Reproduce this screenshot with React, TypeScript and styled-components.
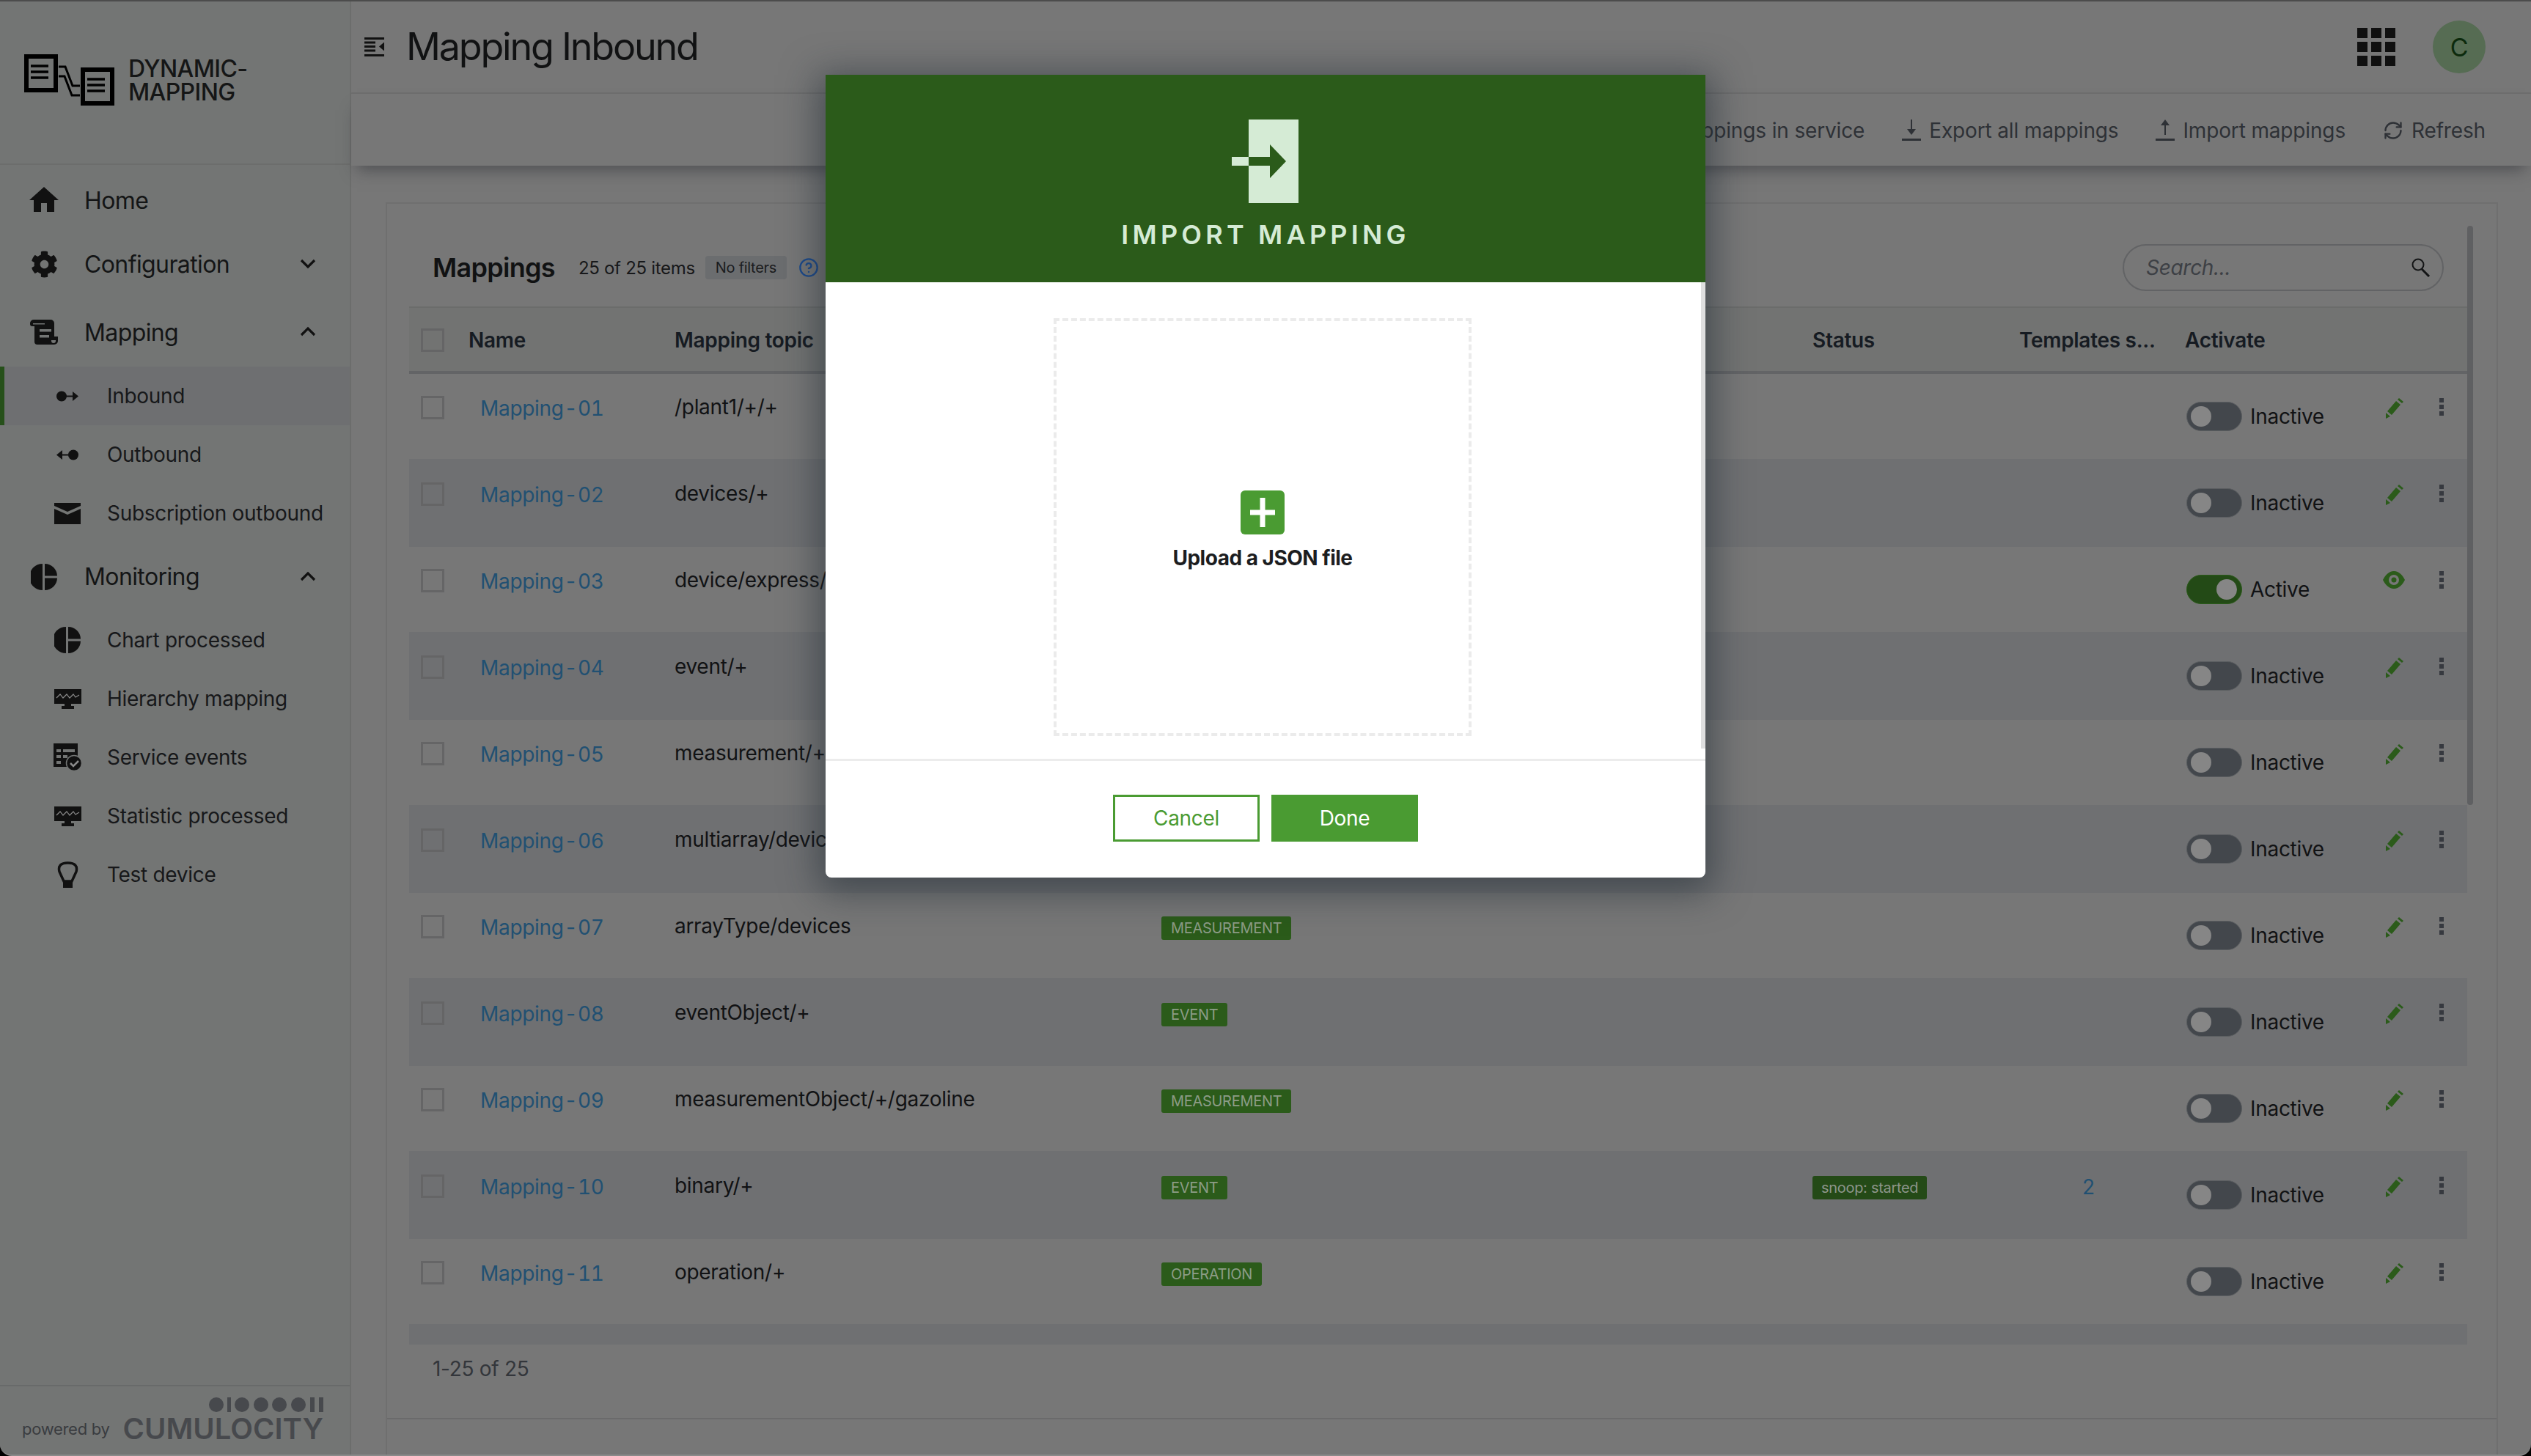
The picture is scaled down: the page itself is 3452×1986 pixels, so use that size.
import * as React from 'react';
import styled, { createGlobalStyle } from 'styled-components';
import { RefreshCw, CircleHelp } from 'lucide-react';
import { MdHome } from 'react-icons/md';
import { FaCog } from 'react-icons/fa';

const fontStack = `Inter, "Liberation Sans", sans-serif`;

const GlobalStyle = createGlobalStyle`
  html, body { margin: 0; padding: 0; background: #000; }
  body { font-family: ${fontStack}; color: #101214; letter-spacing: -0.3px; }
  * { box-sizing: border-box; }
`;

const Page = styled.div`
  position: relative;
  width: 3452px;
  height: 1986px;
  display: flex;
  overflow: hidden;
  background: #777;
  border-top: 2px solid #4c4c4c;
  border-bottom: 2px solid #8a8a8a;
  border-radius: 0 0 16px 16px;
`;

const Sidebar = styled.aside`
  width: 479px;
  flex: none;
  display: flex;
  flex-direction: column;
  background: #737574;
  border-right: 2px solid #6c6d6c;
`;

const Brand = styled.div`
  height: 223px;
  flex: none;
  display: flex;
  align-items: flex-start;
  gap: 18px;
  padding: 72px 0 0 33px;
  border-bottom: 2px solid #6c6d6c;
`;

const BrandText = styled.div`
  font-size: 32px;
  line-height: 32px;
  padding-top: 4px;
  font-weight: 500;
  letter-spacing: -0.6px;
  color: #151616;
`;

const Nav = styled.nav`
  flex: 1;
  padding-top: 23px;
`;

const NavGroup = styled.div<{ $h: number }>`
  height: ${p => p.$h}px;
  display: flex;
  align-items: center;
  padding: 0 46px 0 40px;
  font-size: 32px;
  letter-spacing: -0.6px;
  color: #141516;
`;

const NavIcon = styled.span`
  width: 40px;
  height: 40px;
  margin-right: 35px;
  display: flex;
  align-items: center;
  justify-content: center;
  svg { flex: none; }
`;

const NavLabel = styled.span`
  flex: 1;
`;

const SubList = styled.div<{ $top?: number }>`
  padding-top: ${p => p.$top ?? 0}px;
`;

const NavSub = styled.div<{ $active?: boolean }>`
  height: 80px;
  display: flex;
  align-items: center;
  padding-left: ${p => (p.$active ? 66 : 72)}px;
  font-size: 28px;
  color: #17181a;
  background: ${p => (p.$active ? '#6e6f71' : 'transparent')};
  border-left: ${p => (p.$active ? '6px solid #26501a' : '0')};
`;

const SubIcon = styled.span`
  width: 40px;
  height: 40px;
  margin-right: 34px;
  display: flex;
  align-items: center;
  justify-content: center;
`;

const Powered = styled.div`
  height: 95px;
  flex: none;
  border-top: 2px solid #686a6a;
  display: flex;
  align-items: flex-end;
  justify-content: space-between;
  padding: 0 36px 20px 30px;
  color: #3a3c40;
`;

const PoweredBy = styled.span`
  font-size: 22px;
  line-height: 30px;
  white-space: nowrap;
`;

const CumuloColumn = styled.div`
  display: flex;
  flex-direction: column;
  align-items: flex-end;
  gap: 8px;
`;

const Cumulo = styled.span`
  font-size: 40px;
  line-height: 30px;
  font-weight: 600;
  color: #47494d;
  letter-spacing: 0;
`;

const Main = styled.main`
  flex: 1;
  min-width: 0;
  display: flex;
  flex-direction: column;
`;

const TopBar = styled.header`
  height: 126px;
  flex: none;
  display: flex;
  align-items: center;
  padding: 0 62px 0 18px;
  border-bottom: 2px solid #6e6e6e;
`;

const Title = styled.h1`
  flex: 1;
  margin: 0 0 2px 30px;
  font-size: 52px;
  font-weight: 400;
  letter-spacing: -2.2px;
  color: #111213;
`;

const Avatar = styled.div`
  width: 72px;
  height: 72px;
  margin-left: 51px;
  border-radius: 50%;
  background: #566c53;
  color: #0c2a0c;
  font-size: 34px;
  display: flex;
  align-items: center;
  justify-content: center;
`;

const ActionBar = styled.div`
  height: 98px;
  flex: none;
  display: flex;
  align-items: center;
  justify-content: flex-end;
  gap: 51px;
  padding: 2px 62px 0 0;
  position: relative;
  background: #777;
  box-shadow: 0 14px 20px -8px rgba(40, 42, 48, 0.5);
`;

const Action = styled.span`
  display: flex;
  align-items: center;
  gap: 11px;
  font-size: 28px;
  letter-spacing: -0.15px;
  color: #2e3136;
`;

const Body = styled.div`
  flex: 1;
  min-height: 0;
  padding: 50px 45px 0 47px;
`;

const Card = styled.section`
  position: relative;
  height: 100%;
  border: 2px solid #6f6f6f;
  border-bottom: 0;
  display: flex;
  flex-direction: column;
`;

const CardHead = styled.div`
  height: 140px;
  flex: none;
  display: flex;
  align-items: center;
  padding: 34px 72px 0 62px;
`;

const CardTitle = styled.h2`
  margin: 0 32px 0 0;
  font-size: 36px;
  font-weight: 600;
  letter-spacing: -0.7px;
  color: #111213;
`;

const Count = styled.span`
  font-size: 24px;
  color: #17181a;
`;

const Chip = styled.span`
  height: 32px;
  padding: 0 14px;
  margin: 0 16px 0 14px;
  border-radius: 4px;
  background: #6b6d6f;
  font-size: 20px;
  display: flex;
  align-items: center;
  color: #1b1c1e;
`;

const Spacer = styled.div`
  flex: 1;
`;

const Search = styled.div`
  width: 438px;
  height: 64px;
  border: 2px solid #626365;
  border-radius: 32px;
  display: flex;
  align-items: center;
  justify-content: space-between;
  padding: 0 16px 0 30px;
  font-size: 28px;
  font-style: italic;
  color: #3d4045;
`;

const Table = styled.div`
  margin: 0 40px 0 30px;
`;

const columns = '81px 281px 664px 888px 282px 226px 264px 1fr';

const HeadRow = styled.div`
  height: 92px;
  display: grid;
  grid-template-columns: ${columns};
  align-items: center;
  padding-top: 2px;
  background: #727372;
  border-top: 2px solid #6b6c6b;
  border-bottom: 4px solid #636466;
  font-size: 28px;
  font-weight: 600;
  color: #161b22;
  white-space: nowrap;
`;

const Row = styled.div<{ $even: boolean }>`
  height: ${p => (p.$even ? 120 : 116)}px;
  display: grid;
  grid-template-columns: ${columns};
  align-items: start;
  padding-top: ${p => (p.$even ? 32 : 30)}px;
  background: ${p => (p.$even ? '#6f7072' : 'transparent')};
  font-size: 28px;
  color: #111214;
`;

const StripeRow = styled.div`
  height: 28px;
  background: #6f7072;
`;

const CheckCell = styled.div`
  padding-left: 16px;
  display: flex;
`;

const CheckBox = styled.span`
  width: 32px;
  height: 32px;
  border: 3px solid #656566;
`;

const MapLink = styled.span`
  display: block;
  padding: 2px 0 0 16px;
  word-spacing: -6.5px;
  font-variant-numeric: tabular-nums;
  color: #215072;
`;

const Cell = styled.div`
  line-height: 30px;
  white-space: nowrap;
`;

const Badge = styled.span`
  display: inline-flex;
  align-items: center;
  height: 32px;
  padding: 0 13px;
  border-radius: 3px;
  background: #2b5b1a;
  color: #8c9c86;
  font-size: 20px;
`;

const StatusBadge = styled(Badge)`
  padding: 0 12px;
  background: #244a17;
  color: #8d958a;
`;

const TemplateCount = styled.div`
  padding-left: 86px;
  color: #215072;
`;

const ToggleCell = styled.div`
  display: flex;
  align-items: center;
  gap: 11px;
  padding-top: 8px;
  margin-left: 2px;
`;

const Toggle = styled.span<{ $on: boolean }>`
  position: relative;
  width: 76px;
  height: 40px;
  border-radius: 20px;
  background: ${p => (p.$on ? '#234a16' : '#43474c')};
  border: 1px solid ${p => (p.$on ? '#2b5b1a' : '#5a5d60')};
  display: block;
  &::after {
    content: '';
    position: absolute;
    top: 5px;
    left: ${p => (p.$on ? '40px' : '5px')};
    width: 28px;
    height: 28px;
    border-radius: 50%;
    background: #868686;
  }
`;

const RowActions = styled.div`
  display: flex;
  justify-content: space-between;
  align-items: flex-start;
  padding: 3px 0 0 6px;
  width: 89px;
`;

const Pager = styled.div`
  height: 102px;
  display: flex;
  align-items: center;
  padding: 0 0 34px 62px;
  font-size: 28px;
  color: #33363b;
  border-bottom: 2px solid #6a6a6b;
`;

const ScrollThumb = styled.div`
  position: absolute;
  top: 30px;
  right: 32px;
  width: 8px;
  height: 790px;
  background: #5f6062;
  border-radius: 4px;
`;

const Modal = styled.div`
  position: absolute;
  top: 100px;
  left: 1126px;
  width: 1200px;
  height: 1095px;
  background: #fff;
  border-radius: 0 0 8px 8px;
  box-shadow: 0 10px 50px 10px rgba(30, 40, 50, 0.55);
  display: flex;
  flex-direction: column;
`;

const ModalHead = styled.div`
  height: 283px;
  flex: none;
  background: #2b5b1a;
  display: flex;
  flex-direction: column;
  align-items: center;
  padding-top: 61px;
`;

const ModalTitle = styled.div`
  margin-top: 21px;
  font-size: 36px;
  font-weight: 600;
  letter-spacing: 5.2px;
  color: #d5ebd5;
  line-height: 44px;
`;

const ModalBody = styled.div`
  position: relative;
  height: 653px;
  flex: none;
  display: flex;
  justify-content: center;
  padding: 49px 8px 0 0;
  border-bottom: 3px solid #ececec;
`;

const ModalScroll = styled.div`
  position: absolute;
  top: 0;
  right: 0;
  width: 6px;
  height: 636px;
  background: #dfdfdf;
`;

const DropZone = styled.div`
  width: 570px;
  height: 570px;
  border: 4px dashed #ebebeb;
  display: flex;
  flex-direction: column;
  align-items: center;
  padding-top: 231px;
`;

const PlusBox = styled.div`
  width: 60px;
  height: 60px;
  border-radius: 6px;
  background: #4a9b32;
  display: flex;
  align-items: center;
  justify-content: center;
`;

const UploadText = styled.div`
  margin-top: 15px;
  font-size: 28px;
  line-height: 34px;
  font-weight: 700;
  letter-spacing: -0.5px;
  color: #1c1d1f;
`;

const ModalFoot = styled.div`
  flex: 1;
  display: flex;
  justify-content: center;
  gap: 16px;
  padding-top: 46px;
`;

const Button = styled.button<{ $primary?: boolean }>`
  width: 200px;
  height: 64px;
  border: 3px solid #4a9b32;
  border-radius: 0;
  background: ${p => (p.$primary ? '#4a9b32' : '#fff')};
  color: ${p => (p.$primary ? '#fff' : '#4a9b32')};
  font-family: ${fontStack};
  font-size: 28px;
  letter-spacing: -0.3px;
`;

/* drawn icons */

const Logo = () => (
  <svg width="124" height="72" viewBox="0 0 124 72" fill="none" stroke="#000">
    <rect x="3" y="3" width="40" height="46" strokeWidth="6" />
    <path d="M9 16h24M9 24h24M9 32h24" strokeWidth="3.5" />
    <rect x="80" y="21" width="40" height="46" strokeWidth="6" />
    <path d="M86 34h24M86 42h24M86 50h24" strokeWidth="3.5" />
    <path d="M47 17h9l10 26h10M47 30h8l10 26h11" strokeWidth="3" />
  </svg>
);

const PanelIcon = () => (
  <svg width="27" height="26" viewBox="0 0 27 26" fill="#111">
    <path d="M0 0h27v3H0zM0 5.500h15v3H0zM0 11h15v3H0zM0 16.500h15v3H0zM0 23h27v3H0z" />
    <path d="M27 6.500v12l-7-6z" />
  </svg>
);

const GridIcon = () => (
  <svg width="52" height="52" viewBox="0 0 52 52" fill="#101010">
    {[0, 19, 38].map(y => [0, 19, 38].map(x => <rect key={`${x}-${y}`} x={x} y={y} width="14" height="14" />))}
  </svg>
);

const ScrollIcon = () => (
  <svg width="38" height="34" viewBox="0 0 38 34" fill="#111">
    <path d="M5 0h23a5 5 0 0 1 5 5v18h5v6a5 5 0 0 1-5 5H10a4 4 0 0 1-4-4V9H3a3 3 0 0 1-3-3V5a5 5 0 0 1 5-5z" />
    <path d="M4 5h16v1.600H4zM13 13h16v3.500H13zM13 21h13v3.500H13z" fill="#737574" />
    <path d="M29 28h6v1a3 3 0 0 1-6 0z" fill="#737574" />
  </svg>
);

const PieIcon = () => (
  <svg width="36" height="36" viewBox="0 0 36 36" fill="#111">
    <path d="M16 0v36A18 18 0 0 1 16 0z" />
    <path d="M19 0a17 17 0 0 1 17 16.500H19zM19 19.500h17a17 17 0 0 1-17 16.500z" />
  </svg>
);

const InboundIcon = () => (
  <svg width="30" height="17" viewBox="0 0 30 17" fill="#111">
    <ellipse cx="7" cy="8.500" rx="7" ry="7" />
    <path d="M12 7.500h10V2l8 6.500-8 6.500V9.500H12z" />
  </svg>
);

const OutboundIcon = () => (
  <svg width="30" height="17" viewBox="0 0 30 17" fill="#111">
    <ellipse cx="23" cy="8.500" rx="7" ry="7" />
    <path d="M18 7.500H8V2L0 8.500 8 15V9.500h10z" />
  </svg>
);

const MailIcon = () => (
  <svg width="36" height="29" viewBox="0 0 36 29" fill="#111">
    <path d="M0 0h36v4L18 12 0 4zM0 8l18 8 18-8v21H0z" />
  </svg>
);

const MonitorIcon = () => (
  <svg width="37" height="27" viewBox="0 0 37 27">
    <path d="M0 0h37v20H23v3h4v4H10v-4h4v-3H0z" fill="#111" />
    <path d="M3 12l5-5 4 5 5-5 4 5 5-5 3 4 5-3" fill="none" stroke="#8a8a8a" strokeWidth="1.200" />
  </svg>
);

const EventsIcon = () => (
  <svg width="39" height="38" viewBox="0 0 39 38">
    <path d="M0 0h33v32H0z" fill="#111" />
    <path d="M4 8h6v4H4zM13 8h16v4H13zM4 16h6v4H4zM4 24h6v4H4zM13 16h6v4h-6z" fill="#737574" />
    <circle cx="28" cy="27" r="10.500" fill="#111" stroke="#737574" strokeWidth="1.500" />
    <path d="M23 27l4 4 7-7" fill="none" stroke="#8a8a8a" strokeWidth="2.500" />
  </svg>
);

const BulbIcon = () => (
  <svg width="29" height="36" viewBox="0 0 29 36" fill="none">
    <path d="M9 27L3 14Q0 2 14.500 2T26 14l-6 13z" stroke="#111" strokeWidth="3.500" />
    <rect x="8" y="27" width="13" height="9" fill="#111" />
  </svg>
);

const Chevron = ({ up }: { up?: boolean }) => (
  <svg width="22" height="16" viewBox="0 0 22 16" fill="none" stroke="#111" strokeWidth="3.200">
    <path d={up ? 'M2 12l9-9 9 9' : 'M2 3l9 9 9-9'} />
  </svg>
);

const DownloadIcon = () => (
  <svg width="26" height="30" viewBox="0 0 26 30" fill="#2e3136">
    <path d="M12 0h2v13h5l-6 8-6-8h5zM0 26h26v3H0z" />
  </svg>
);

const UploadIcon = () => (
  <svg width="26" height="30" viewBox="0 0 26 30" fill="#2e3136">
    <path d="M13 0l6 8h-5v13h-2V8H7zM0 26h26v3H0z" />
  </svg>
);

const SearchGlass = () => (
  <svg width="27" height="26" viewBox="0 0 27 26" fill="none" stroke="#141516">
    <circle cx="10" cy="9" r="7.500" strokeWidth="2" />
    <path d="M15 15l10 10" strokeWidth="3" />
  </svg>
);

const Pencil = () => (
  <svg width="28" height="28" viewBox="0 0 28 28" fill="#2b5b1a">
    <path d="M6 18L18 4l6 5-12 14zM20 2l2-2 6 5-2 2zM4 20l6 5-6 3z" />
  </svg>
);

const Eye = () => (
  <svg width="30" height="24" viewBox="0 0 30 24" fill="#2b5b1a" fillRule="evenodd">
    <path d="M15 0c7 0 12 6 15 12-3 6-8 12-15 12S3 18 0 12C3 6 8 0 15 0zm0 5a7 7 0 1 0 0 14 7 7 0 0 0 0-14zm0 3.500a3.500 3.500 0 1 1 0 7 3.500 3.500 0 0 1 0-7z" />
  </svg>
);

const Dots = () => (
  <svg width="6" height="24" viewBox="0 0 6 24" fill="#36393f">
    <path d="M0 0h6v6H0zM0 9h6v6H0zM0 18h6v6H0z" />
  </svg>
);

const ImportGlyph = () => (
  <svg width="92" height="114" viewBox="0 0 92 114" fill="#d5ebd5">
    <path d="M23 0h68v114H23V63h29v17l22-23-22-23v17H23z" />
    <path d="M0 51h23v12H0z" />
  </svg>
);

const PlusGlyph = () => (
  <svg width="34" height="40" viewBox="0 0 34 40" fill="#fff">
    <path d="M13.500 0h7v16.500H34v7H20.500V40h-7V23.500H0v-7h13.500z" />
  </svg>
);

const CumuloDots = () => (
  <svg width="156" height="20" viewBox="0 0 156 20" fill="#47494d">
    <circle cx="10" cy="10" r="10" />
    <rect x="25" y="0" width="5" height="20" />
    <circle cx="45" cy="10" r="10" />
    <circle cx="71" cy="10" r="10" />
    <circle cx="96" cy="10" r="10" />
    <circle cx="122" cy="10" r="10" />
    <rect x="138" y="0" width="6" height="20" />
    <rect x="150" y="0" width="6" height="20" />
  </svg>
);

type Mapping = { name: string; topic: string; type: string; status?: string; templates?: number; active?: boolean };

const mappings: Mapping[] = [
  { name: 'Mapping - 01', topic: '/plant1/+/+', type: 'MEASUREMENT' },
  { name: 'Mapping - 02', topic: 'devices/+', type: 'MEASUREMENT' },
  { name: 'Mapping - 03', topic: 'device/express/+', type: 'MEASUREMENT', active: true },
  { name: 'Mapping - 04', topic: 'event/+', type: 'EVENT' },
  { name: 'Mapping - 05', topic: 'measurement/+/+', type: 'MEASUREMENT' },
  { name: 'Mapping - 06', topic: 'multiarray/devices/+', type: 'MEASUREMENT' },
  { name: 'Mapping - 07', topic: 'arrayType/devices', type: 'MEASUREMENT' },
  { name: 'Mapping - 08', topic: 'eventObject/+', type: 'EVENT' },
  { name: 'Mapping - 09', topic: 'measurementObject/+/gazoline', type: 'MEASUREMENT' },
  { name: 'Mapping - 10', topic: 'binary/+', type: 'EVENT', status: 'snoop: started', templates: 2 },
  { name: 'Mapping - 11', topic: 'operation/+', type: 'OPERATION' },
];

const App = () => (
  <>
    <GlobalStyle />
    <Page>
      <Sidebar>
        <Brand>
          <Logo />
          <BrandText>DYNAMIC-<br />MAPPING</BrandText>
        </Brand>
        <Nav>
          <NavGroup $h={50}>
            <NavIcon><MdHome size={48} color="#111" /></NavIcon>
            <NavLabel>Home</NavLabel>
          </NavGroup>
          <NavGroup $h={124}>
            <NavIcon><FaCog size={37} color="#111" /></NavIcon>
            <NavLabel>Configuration</NavLabel>
            <Chevron />
          </NavGroup>
          <NavGroup $h={62}>
            <NavIcon><ScrollIcon /></NavIcon>
            <NavLabel>Mapping</NavLabel>
            <Chevron up />
          </NavGroup>
          <SubList $top={16}>
            <NavSub $active><SubIcon><InboundIcon /></SubIcon>Inbound</NavSub>
            <NavSub><SubIcon><OutboundIcon /></SubIcon>Outbound</NavSub>
            <NavSub><SubIcon><MailIcon /></SubIcon>Subscription outbound</NavSub>
          </SubList>
          <NavGroup $h={93}>
            <NavIcon><PieIcon /></NavIcon>
            <NavLabel>Monitoring</NavLabel>
            <Chevron up />
          </NavGroup>
          <SubList>
            <NavSub><SubIcon><PieIcon /></SubIcon>Chart processed</NavSub>
            <NavSub><SubIcon><MonitorIcon /></SubIcon>Hierarchy mapping</NavSub>
            <NavSub><SubIcon><EventsIcon /></SubIcon>Service events</NavSub>
            <NavSub><SubIcon><MonitorIcon /></SubIcon>Statistic processed</NavSub>
            <NavSub><SubIcon><BulbIcon /></SubIcon>Test device</NavSub>
          </SubList>
        </Nav>
        <Powered>
          <PoweredBy>powered by</PoweredBy>
          <CumuloColumn>
            <CumuloDots />
            <Cumulo>CUMULOCITY</Cumulo>
          </CumuloColumn>
        </Powered>
      </Sidebar>
      <Main>
        <TopBar>
          <PanelIcon />
          <Title>Mapping Inbound</Title>
          <GridIcon />
          <Avatar>C</Avatar>
        </TopBar>
        <ActionBar>
          <Action>Reload mappings in service</Action>
          <Action><DownloadIcon />Export all mappings</Action>
          <Action><UploadIcon />Import mappings</Action>
          <Action><RefreshCw size={28} strokeWidth={2} color="#2e3136" />Refresh</Action>
        </ActionBar>
        <Body>
          <Card>
            <ScrollThumb />
            <CardHead>
              <CardTitle>Mappings</CardTitle>
              <Count>25 of 25 items</Count>
              <Chip>No filters</Chip>
              <CircleHelp size={28} strokeWidth={2} color="#1c4a8c" />
              <Spacer />
              <Search>Search...<SearchGlass /></Search>
            </CardHead>
            <Table>
              <HeadRow>
                <CheckCell><CheckBox /></CheckCell>
                <div>Name</div>
                <div>Mapping topic</div>
                <div>Type</div>
                <div>Status</div>
                <div>Templates s...</div>
                <div>Activate</div>
                <div />
              </HeadRow>
              {mappings.map((m, i) => (
                <Row key={m.name} $even={i % 2 === 1}>
                  <CheckCell><CheckBox /></CheckCell>
                  <Cell><MapLink>{m.name}</MapLink></Cell>
                  <Cell>{m.topic}</Cell>
                  <Cell><Badge>{m.type}</Badge></Cell>
                  <Cell>{m.status && <StatusBadge>{m.status}</StatusBadge>}</Cell>
                  <TemplateCount>{m.templates}</TemplateCount>
                  <ToggleCell>
                    <Toggle $on={!!m.active} />
                    {m.active ? 'Active' : 'Inactive'}
                  </ToggleCell>
                  <RowActions>
                    {m.active ? <Eye /> : <Pencil />}
                    <Dots />
                  </RowActions>
                </Row>
              ))}
              <StripeRow />
            </Table>
            <Pager>1-25 of 25</Pager>
          </Card>
        </Body>
      </Main>
      <Modal>
        <ModalHead>
          <ImportGlyph />
          <ModalTitle>IMPORT MAPPING</ModalTitle>
        </ModalHead>
        <ModalBody>
          <ModalScroll />
          <DropZone>
            <PlusBox><PlusGlyph /></PlusBox>
            <UploadText>Upload a JSON file</UploadText>
          </DropZone>
        </ModalBody>
        <ModalFoot>
          <Button>Cancel</Button>
          <Button $primary>Done</Button>
        </ModalFoot>
      </Modal>
    </Page>
  </>
);

export default App;
